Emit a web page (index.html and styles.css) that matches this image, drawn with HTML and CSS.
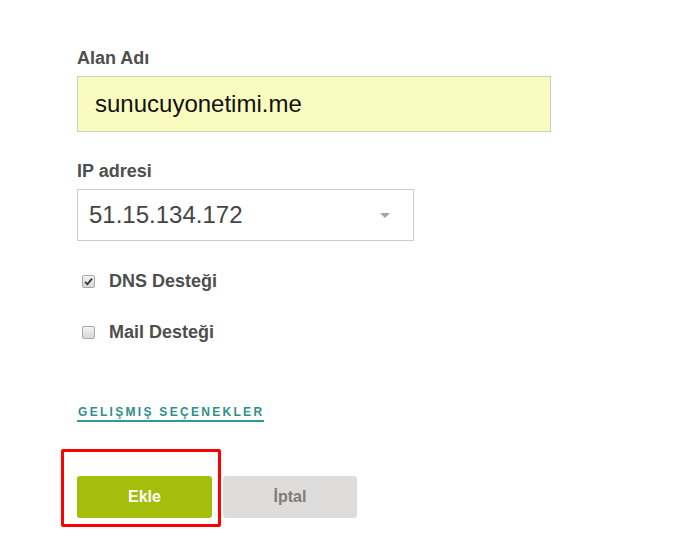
FILE: index.html
```html
<!DOCTYPE html>
<html lang="tr">
<head>
<meta charset="utf-8">
<title>Alan Adı Ekle</title>
<link rel="stylesheet" href="styles.css">
</head>
<body>
<form class="form">
  <div class="field">
    <label class="label">Alan Adı</label>
    <div class="text-input">sunucuyonetimi.me</div>
  </div>
  <div class="field field-ip">
    <label class="label">IP adresi</label>
    <div class="select">
      <span class="select-value">51.15.134.172</span>
      <span class="select-arrow"></span>
    </div>
  </div>
  <div class="checks">
    <div class="check-row">
      <span class="checkbox">
        <svg width="9" height="9" viewBox="0 0 9 9"><path d="M1 4.8 L3.4 7.2 L8 1.6" fill="none" stroke="#333" stroke-width="1.8"/></svg>
      </span>
      <span class="check-label">DNS Desteği</span>
    </div>
    <div class="check-row">
      <span class="checkbox"></span>
      <span class="check-label">Mail Desteği</span>
    </div>
  </div>
  <div class="advanced"><a class="advanced-link">GELIŞMIŞ SEÇENEKLER</a></div>
  <div class="actions">
    <div class="highlight"><button type="button" class="btn btn-primary">Ekle</button></div>
    <button type="button" class="btn btn-secondary">İptal</button>
  </div>
</form>
</body>
</html>
```
FILE: styles.css
```css
html, body {
  margin: 0;
  padding: 0;
  background: #ffffff;
}
body {
  font-family: "Liberation Sans", Arial, sans-serif;
}
.form {
  padding: 47px 0 20px 77px;
}
.label {
  display: block;
  font-weight: bold;
  font-size: 18px;
  line-height: 22px;
  color: #4e4e4e;
  margin-bottom: 7px;
}
.text-input {
  box-sizing: border-box;
  width: 474px;
  height: 56px;
  border: 1px solid #cccccc;
  background: #fafcbf;
  padding-left: 17px;
  font-size: 24px;
  color: #111111;
  display: flex;
  align-items: center;
}
.field-ip {
  margin-top: 28px;
}
.select {
  box-sizing: border-box;
  width: 337px;
  height: 52px;
  border: 1px solid #cccccc;
  background: #ffffff;
  padding: 0 23px 0 11px;
  display: flex;
  align-items: center;
  justify-content: space-between;
}
.select-value {
  font-size: 24px;
  color: #444444;
}
.select-arrow {
  width: 0;
  height: 0;
  border-left: 5px solid transparent;
  border-right: 5px solid transparent;
  border-top: 5px solid #a3a3a3;
}
.checks {
  margin-top: 29px;
  display: flex;
  flex-direction: column;
  gap: 29px;
}
.check-row {
  height: 22px;
  display: flex;
  align-items: center;
  padding-left: 5px;
}
.checkbox {
  box-sizing: border-box;
  width: 13px;
  height: 13px;
  border: 1px solid #a8a8a8;
  border-radius: 2px;
  background: linear-gradient(#f4f4f4, #d8d8d8);
  display: flex;
  align-items: center;
  justify-content: center;
  margin-right: 14px;
}
.check-label {
  font-weight: bold;
  font-size: 18px;
  color: #4e4e4e;
}
.advanced {
  margin-top: 60px;
  line-height: 16px;
}
.advanced-link {
  display: inline-block;
  font-weight: bold;
  font-size: 12px;
  line-height: 16px;
  letter-spacing: 2.3px;
  color: #2f8f8a;
  border-bottom: 2px solid #2f9a94;
  padding-left: 1px;
}
.actions {
  margin-top: 54px;
  display: flex;
  gap: 11px;
}
.highlight {
  position: relative;
}
.highlight::before {
  content: "";
  position: absolute;
  left: -16px;
  right: -9px;
  top: -27px;
  bottom: -9px;
  border: 3px solid #ff0000;
  border-radius: 2px;
  pointer-events: none;
}
.btn {
  font-family: "Liberation Sans", Arial, sans-serif;
  font-weight: bold;
  font-size: 16px;
  width: 135px;
  height: 42px;
  border: none;
  border-radius: 3px;
  padding: 0;
  display: block;
}
.btn-primary {
  background: #a3be0b;
  color: #ffffff;
}
.btn-secondary {
  width: 134px;
  background: #dfdddb;
  color: #7c7c7c;
}
```
